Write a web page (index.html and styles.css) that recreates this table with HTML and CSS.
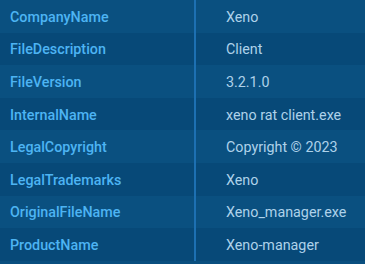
FILE: index.html
```html
<!DOCTYPE html>
<html>
<head>
<meta charset="utf-8">
<link rel="stylesheet" href="styles.css">
</head>
<body>
<div class="props">
  <div class="row odd"><div class="key">CompanyName</div><div class="val">Xeno</div></div>
  <div class="row even"><div class="key">FileDescription</div><div class="val">Client</div></div>
  <div class="row odd"><div class="key">FileVersion</div><div class="val">3.2.1.0</div></div>
  <div class="row even"><div class="key">InternalName</div><div class="val">xeno rat client.exe</div></div>
  <div class="row odd"><div class="key">LegalCopyright</div><div class="val">Copyright © 2023</div></div>
  <div class="row even"><div class="key">LegalTrademarks</div><div class="val">Xeno</div></div>
  <div class="row odd"><div class="key">OriginalFileName</div><div class="val">Xeno_manager.exe</div></div>
  <div class="row even"><div class="key">ProductName</div><div class="val">Xeno-manager</div></div>
</div>
</body>
</html>
```
FILE: styles.css
```css
html, body {
  margin: 0;
  padding: 0;
  background: #0a4f7f;
  width: 365px;
  height: 264px;
  overflow: hidden;
}
.props {
  display: flex;
  flex-direction: column;
  font-family: Roboto, "Liberation Sans", sans-serif;
  font-size: 14.3px;
}
.row {
  display: grid;
  grid-template-columns: 194px 1fr;
  height: 32.6px;
  align-items: stretch;
}
.odd { background: #0a5080; }
.even { background: #074978; }
.key {
  display: flex;
  align-items: center;
  padding-left: 10px;
  padding-top: 1px;
  color: #4db4f3;
  font-weight: 500;
}
.val {
  display: flex;
  align-items: center;
  padding-left: 30px;
  padding-top: 1px;
  color: #aed2ea;
  border-left: 2px solid #1d70b2;
}
```
